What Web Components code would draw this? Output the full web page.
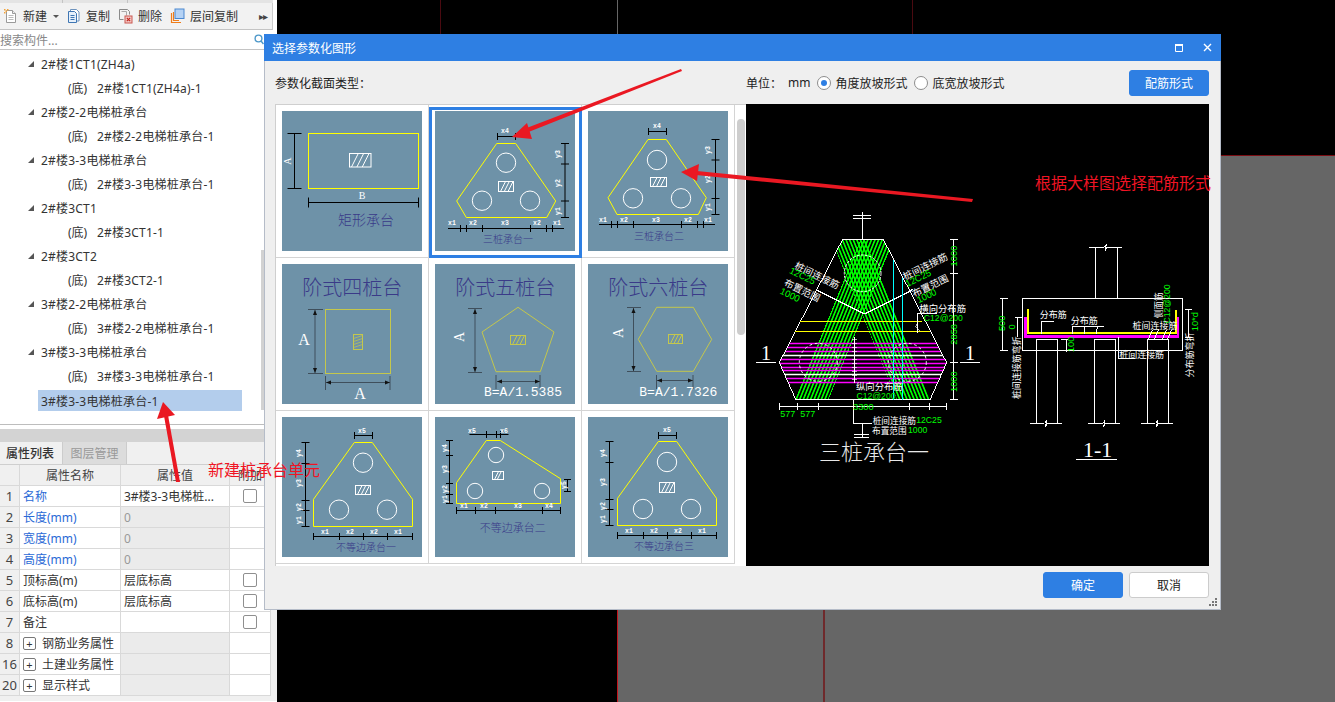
<!DOCTYPE html>
<html lang="zh">
<head>
<meta charset="utf-8">
<title>选择参数化图形</title>
<style>
  html, body { margin: 0; padding: 0; background: #000; }
  body { font: 12px "Noto Sans", "Noto Sans CJK SC", sans-serif; color: #333; overflow: hidden; }
</style>
</head>
<body>
<cad-desk>
  <side-panel></side-panel>
  <param-dialog slot="window"></param-dialog>
  <note-arrows slot="window"></note-arrows>
</cad-desk>

<script>
const UI_FONT = `"Noto Sans", "Noto Sans CJK SC", sans-serif`;
const BLUE = '#2e7fe3';

/* ---------- desk behind the windows ---------- */
class CadDesk extends HTMLElement {
  constructor() {
    super();
    this.attachShadow({ mode: 'open' });
  }
  connectedCallback() {
    this.shadowRoot.innerHTML = `
      <style>
        :host { display: block; position: relative; width: 1335px; height: 702px; background: #000; overflow: hidden; }
        .grey { position: absolute; left: 617px; top: 156px; right: 0; bottom: 0; background: #666; }
        .edge { position: absolute; left: 617px; top: 155px; right: 0; height: 1px; background: #7a0c12; }
        .v { position: absolute; top: 0; bottom: 0; width: 1px; }
        .v1 { left: 440px; height: 156px; bottom: auto; background: #4a0a10; }
        .v2 { left: 617px; background: #c4141c; }
        .v2t { left: 617px; bottom: auto; height: 156px; background: #666; }
        .v3 { left: 912px; height: 156px; bottom: auto; background: #4a0a10; }
        .v4 { left: 823px; top: 156px; width: 2px; background: #6f2a2c; }
        ::slotted(side-panel) { position: relative; }
      </style>
      <div class="grey"></div><div class="edge"></div>
      <div class="v v1"></div><div class="v v2"></div><div class="v v2t"></div><div class="v v3"></div><div class="v v4"></div>
      <slot></slot>
      <slot name="window"></slot>
    `;
  }
}

/* ---------- left side: toolbar, tree, properties ---------- */
const icons = {
  nuevo: `<svg width="15" height="16" viewBox="0 0 15 16"><path d="M3.5 2.5h6l3 3v9h-9z" fill="#fff" stroke="#9a9a9a"/><path d="M9.5 2.5v3h3" fill="#eee" stroke="#9a9a9a"/><path d="M5.5 7.5h5M5.5 9.5h5M5.5 11.5h5" stroke="#bbb"/><path d="M1 1h1.5v1.5H1zM4 1h1.5v1.5H4zM1 4h1.5v1.5H1zM2.5 2.5H4V4H2.5z" fill="#f2a33a"/></svg>`,
  copia: `<svg width="15" height="16" viewBox="0 0 15 16"><path d="M4.5 3V1.5h6l2.5 2.5v9h-2" fill="#fff" stroke="#6e93bd"/><path d="M2.5 3.5h6l2 2v9h-8z" fill="#e6f0fb" stroke="#3f76b3"/><path d="M4.5 7.5h4M4.5 9.5h4M4.5 11.5h4" stroke="#3f76b3"/></svg>`,
  borra: `<svg width="15" height="16" viewBox="0 0 15 16"><path d="M1.5 1.5h8l2 2v3" fill="none" stroke="#8a8a8a"/><path d="M1.5 1.5v10h4" fill="none" stroke="#8a8a8a"/><path d="M3.5 3.5h5v4" fill="none" stroke="#aaa"/><rect x="7" y="8" width="7" height="7" fill="#f5c9c6" stroke="#c9564f"/><path d="M8.8 9.8l3.4 3.4M12.2 9.8l-3.4 3.4" stroke="#c22a22" stroke-width="1.2"/></svg>`,
  capas: `<svg width="15" height="16" viewBox="0 0 15 16"><path d="M1.5 5v9.5H11" fill="none" stroke="#ef7d1a" stroke-width="1.2"/><path d="M3.5 4v8.5H9" fill="none" stroke="#ef7d1a" stroke-width="1.2"/><rect x="5" y="1" width="9" height="9.5" fill="#b5d2f4" stroke="#4a87d0"/></svg>`
};

class ToolBtn extends HTMLElement {
  constructor() {
    super();
    this.attachShadow({ mode: 'open' });
  }
  connectedCallback() {
    this.shadowRoot.innerHTML = `
      <style>
        :host { display: inline-flex; align-items: center; gap: 5px; height: 27px; color: #333; white-space: nowrap; }
        svg { display: block; }
      </style>
      ${icons[this.getAttribute('icon')]}<slot></slot>
    `;
  }
}

const arbol = [
  ['2#楼1CT1(ZH4a)', '2#楼1CT1(ZH4a)-1'],
  ['2#楼2-2电梯桩承台', '2#楼2-2电梯桩承台-1'],
  ['2#楼3-3电梯桩承台', '2#楼3-3电梯桩承台-1'],
  ['2#楼3CT1', '2#楼3CT1-1'],
  ['2#楼3CT2', '2#楼3CT2-1'],
  ['3#楼2-2电梯桩承台', '3#楼2-2电梯桩承台-1'],
  ['3#楼3-3电梯桩承台', '3#楼3-3电梯桩承台-1']
];

class ComponentTree extends HTMLElement {
  constructor() {
    super();
    this.attachShadow({ mode: 'open' });
  }
  connectedCallback() {
    const filas = arbol.map(([padre, hijo]) => `
      <div class="row parent"><i></i><span>${padre}</span></div>
      <div class="row child"><span class="di">(底)</span><span>${hijo}</span></div>
    `).join('');
    this.shadowRoot.innerHTML = `
      <style>
        :host { display: block; position: relative; height: 375px; padding-top: 2px; box-sizing: border-box; background: #fff; border-bottom: 1px solid #bdbdbd; color: #333; letter-spacing: .2px; }
        .row { display: flex; align-items: center; height: 24px; white-space: nowrap; }
        .parent { padding-left: 28px; }
        .parent i { width: 0; height: 0; margin-right: 7px; border-left: 6px solid transparent; border-bottom: 6px solid #555; }
        .child { padding-left: 68px; }
        .di { width: 29px; letter-spacing: 0; }
        .sel { margin-left: 38px; width: 204px; height: 21px; margin-top: 2px; padding-left: 3px; box-sizing: border-box; background: #b3cdec; }
        .bar { position: absolute; left: 261px; top: 200px; width: 3px; height: 160px; background: #d2d2d2; }
      </style>
      ${filas}
      <div class="row sel"><span>3#楼3-3电梯桩承台-1</span></div>
      <div class="bar"></div>
    `;
  }
}

const props = [
  ['1', '名称', '3#楼3-3电梯桩...', 'a', true],
  ['2', '长度(mm)', '0', 'g', false],
  ['3', '宽度(mm)', '0', 'g', false],
  ['4', '高度(mm)', '0', 'g', false],
  ['5', '顶标高(m)', '层底标高', 'n', true],
  ['6', '底标高(m)', '层底标高', 'n', true],
  ['7', '备注', '', 'n', true]
];
const grupos = [['8', '钢筋业务属性'], ['16', '土建业务属性'], ['20', '显示样式']];

class PropTable extends HTMLElement {
  constructor() {
    super();
    this.attachShadow({ mode: 'open' });
  }
  connectedCallback() {
    const filas = props.map(([n, nombre, valor, tipo, check]) => {
      const azul = ['1', '2', '3', '4'].includes(n) ? 'azul' : '';
      return `
        <div class="n">${n}</div>
        <div class="c ${azul}">${nombre}</div>
        <div class="c ${tipo === 'g' ? 'off' : ''}">${valor}</div>
        <div class="c chk">${check ? '<b></b>' : ''}</div>`;
    }).join('');
    const extra = grupos.map(([n, nombre]) => `
        <div class="n">${n}</div>
        <div class="c grp"><u>+</u>${nombre}</div>
        <div class="c off"></div>
        <div class="c"></div>`).join('');
    this.shadowRoot.innerHTML = `
      <style>
        :host { display: block; background: #f0f0f0; height: 272px; }
        .band { height: 13px; background: #d3d3d3; margin-top: 4px; position: relative; }
        .tabs { display: flex; height: 22px; padding-left: 0; }
        .tab { display: flex; align-items: center; justify-content: center; height: 22px; box-sizing: border-box; }
        .t1 { width: 62px; padding-right: 2px; color: #333; font-weight: 500; }
        .t2 { width: 65px; background: #dcdcdc; color: #999; border-left: 1px solid #ccc; border-right: 1px solid #ccc; }
        .grid { display: grid; grid-template-columns: 20px 101px 109px 41px; grid-auto-rows: 21px; width: 271px; border-top: 1px solid #cfcfcf; background: #fff; }
        .h, .n, .c { border-bottom: 1px solid #d9d9d9; border-right: 1px solid #d9d9d9; display: flex; align-items: center; box-sizing: border-box; white-space: nowrap; overflow: hidden; }
        .h { justify-content: center; background: #f0f0f0; color: #444; }
        .n { justify-content: center; background: #f0f0f0; color: #444; font-size: 13px; }
        .c { padding-left: 3px; background: #fff; color: #333; }
        .azul { color: #2b6ad6; }
        .off { background: #ebebeb; color: #999; }
        .chk { justify-content: center; padding: 0; }
        .chk b { width: 12px; height: 12px; border: 1px solid #8f8f8f; border-radius: 2px; background: #fff; }
        .grp { color: #333; }
        u { width: 11px; height: 11px; border: 1px solid #777; border-radius: 2px; margin-right: 6px; text-decoration: none; display: flex; align-items: center; justify-content: center; font-size: 11px; line-height: 1; flex: none; }
      </style>
      <div class="band"></div>
      <div class="tabs"><div class="tab t1">属性列表</div><div class="tab t2">图层管理</div></div>
      <div class="grid">
        <div class="h"></div><div class="h">属性名称</div><div class="h">属性值</div><div class="h">附加</div>
        ${filas}${extra}
      </div>
    `;
  }
}

class SidePanel extends HTMLElement {
  constructor() {
    super();
    this.attachShadow({ mode: 'open' });
  }
  connectedCallback() {
    this.shadowRoot.innerHTML = `
      <style>
        :host { display: block; width: 277px; height: 702px; background: #fff; overflow: hidden; }
        .strip { height: 3px; width: 273px; background: linear-gradient(#c4c4c4, #c4c4c4) 62px 0 / 1px 3px no-repeat, linear-gradient(#c4c4c4, #c4c4c4) 127px 0 / 1px 3px no-repeat, #e4e4e4; }
        .tools { display: flex; align-items: center; height: 27px; width: 273px; box-sizing: border-box; padding-left: 3px; background: #f2f2f2; border-bottom: 1px solid #c4c4c4; border-right: 1px solid #ccc; }
        tool-btn { margin-right: 8px; }
        .caret { width: 0; height: 0; border: 3px solid transparent; border-top: 3px solid #555; margin: 3px 7px 0 -2px; }
        .more { margin-left: auto; margin-right: 5px; color: #444; font-size: 10px; letter-spacing: -1px; }
        .search { display: flex; align-items: center; justify-content: space-between; height: 20px; box-sizing: border-box; color: #888; border-bottom: 1px solid #c4c4c4; padding-right: 13px; }
        .search svg { display: block; }
      </style>
      <div class="strip"></div>
      <div class="tools">
        <tool-btn icon="nuevo">新建</tool-btn><span class="caret"></span>
        <tool-btn icon="copia">复制</tool-btn>
        <tool-btn icon="borra">删除</tool-btn>
        <tool-btn icon="capas">层间复制</tool-btn>
        <span class="more">▸▸</span>
      </div>
      <div class="search"><span>搜索构件...</span>
        <svg width="10" height="11" viewBox="0 0 10 11"><circle cx="4.5" cy="4.5" r="3.4" fill="none" stroke="#4c97c9" stroke-width="1.4"/><path d="M7 7l2.5 3" stroke="#4c97c9" stroke-width="1.5"/></svg>
      </div>
      <component-tree></component-tree>
      <prop-table></prop-table>
    `;
  }
}

/* ---------- thumbnails of the parametric shapes ---------- */
const S = { y: '#ffff00', py: '#c4c74c', k: '#000', w: '#fff', t: '#3a3a88' };
const ln = (a, b, c, d, col = S.k, w = 1) => `<line x1="${a}" y1="${b}" x2="${c}" y2="${d}" stroke="${col}" stroke-width="${w}"/>`;
const poly = (pts, col = S.y, w = 1) => `<polygon points="${pts}" fill="none" stroke="${col}" stroke-width="${w}"/>`;
const circ = (x, y, r = 9.7) => `<circle cx="${x}" cy="${y}" r="${r}" fill="none" stroke="#fff"/>`;
const lab = (x, y, t, rot = 0, size = 6.5, fam = 'Liberation Mono') =>
  `<text x="${x}" y="${y}" fill="#fff" font-size="${size}" font-family="${fam}" font-weight="${fam === 'Liberation Mono' ? 700 : 400}" text-anchor="middle" dominant-baseline="central"${rot ? ` transform="rotate(${rot} ${x} ${y})"` : ''}>${t}</text>`;
const title = (x, y, t, size = 10) =>
  `<text x="${x}" y="${y}" fill="${S.t}" font-size="${size}" font-weight="300" font-family="Noto Sans CJK SC" text-anchor="middle" dominant-baseline="central">${t}</text>`;
const hatch = (x1, y1, x2, y2, col = '#fff') => {
  let out = `<rect x="${x1}" y="${y1}" width="${x2 - x1}" height="${y2 - y1}" fill="none" stroke="${col}"/>`;
  const w = x2 - x1, h = y2 - y1;
  if (h > w) {
    // rectangulo alto: rayas cortas de lado a lado
    for (let y = y1 + 3; y < y2; y += 3) out += ln(x1, y + 1, x2, y - 2, col, .7);
    return out;
  }
  for (let x = x1 + 2; x < x2 - h / 2; x += w / 4) out += ln(x, y2, x + h / 2, y1, col);
  return out;
};
const dimH = (y, xs, a = xs[0], b = xs[xs.length - 1], t = 3.5) =>
  ln(a, y, b, y) + xs.map(x => ln(x, y - t, x, y + t)).join('');
const dimV = (x, ys, t = 3.5) =>
  ln(x, ys[0], x, ys[ys.length - 1]) + ys.map(y => ln(x - t, y, x + t, y)).join('');
const arrowDim = (a, b, c, d) => {
  // linea gris con dos puntas
  const v = a === c;
  const p1 = v ? `${a - 2},${b + 5} ${a + 2},${b + 5} ${a},${b}` : `${a + 5},${b - 2} ${a + 5},${b + 2} ${a},${b}`;
  const p2 = v ? `${c - 2},${d - 5} ${c + 2},${d - 5} ${c},${d}` : `${c - 5},${d - 2} ${c - 5},${d + 2} ${c},${d}`;
  return ln(a, b, c, d, '#3f4f5c') + `<polygon points="${p1}" fill="#111"/><polygon points="${p2}" fill="#111"/>`;
};

const dibujos = {
  rect: () =>
    `<rect x="26.5" y="22.5" width="110" height="55" fill="none" stroke="${S.y}"/>` +
    dimV(12.5, [22.5, 77.5], 7) + dimH(91.5, [26.5, 136.5], 26.5, 136.5, 5) +
    lab(5.5, 50, 'A', -90, 10, 'Liberation Serif') + lab(80, 84, 'B', 0, 10, 'Liberation Serif') +
    hatch(67.5, 42.5, 89, 56) + title(84, 108, '矩形承台', 14),
  tres1: () =>
    poly('61.7,32.5 80.7,32.5 120.7,90 111.7,106.5 31.3,106.5 21.7,90') +
    circ(71, 51.7) + circ(47, 89.7) + circ(95, 89.7) + hatch(63.5, 70.5, 78.5, 80.5) +
    dimH(25.5, [62.5, 80.5]) + lab(70, 20, 'x4') +
    dimV(130, [32.5, 53, 90, 106.5], 4) + lab(123, 43, 'y3', -90) + lab(123, 72, 'y2', -90) + lab(123, 100, 'y1', -90) +
    dimH(117.5, [25.5, 31.5, 47.5, 95.5, 111.5, 117.5], 13, 129) +
    lab(17, 112, 'x1') + lab(38, 112, 'x2') + lab(70, 112, 'x3') + lab(102, 112, 'x2') + lab(122, 112, 'x1') +
    title(73, 127, '三桩承台一'),
  tres2: () =>
    poly('60,28.5 78.3,28.5 118.3,86.7 110.3,103.5 29,103.5 20,86.7') +
    circ(69, 49) + circ(45, 87.3) + circ(93, 87.3) + hatch(62.5, 66.5, 78.5, 75.5) +
    dimH(20.5, [60.5, 78.5]) + lab(69, 15.5, 'x4') +
    dimV(127.5, [28.5, 49, 87.5, 103.5], 4) + lab(120.5, 39, 'y3', -90) + lab(120.5, 68, 'y2', -90) + lab(120.5, 96, 'y1', -90) +
    dimH(113.5, [23.5, 29.5, 45.5, 93.5, 109.5, 115.5], 11, 127) +
    lab(15, 109, 'x1') + lab(36, 109, 'x2') + lab(68, 109, 'x3') + lab(100, 109, 'x2') + lab(120, 109, 'x1') +
    title(71, 124, '三桩承台二'),
  cuatro: () =>
    title(70.3, 22.3, '阶式四桩台', 20) +
    `<rect x="43.5" y="45.5" width="65" height="64" fill="none" stroke="${S.py}"/>` +
    ln(26, 45.5, 41, 45.5, '#3f4f5c') + ln(26, 109.5, 41, 109.5, '#3f4f5c') + arrowDim(33, 46, 33, 109) +
    ln(43.5, 112, 43.5, 126, '#3f4f5c') + ln(108, 112, 108, 126, '#3f4f5c') + arrowDim(44, 118.5, 108, 118.5) +
    lab(22, 75, 'A', 0, 16, 'Liberation Serif') + lab(78, 129, 'A', 0, 16, 'Liberation Serif') +
    hatch(71.5, 70.5, 80.5, 85.5, S.py),
  cinco: () =>
    title(70.3, 22.3, '阶式五桩台', 20) +
    poly('83,43.3 119,68 105.3,107.7 61,107.7 47,68', S.py) +
    ln(33, 44.5, 47, 44.5, '#3f4f5c') + ln(33, 108.5, 47, 108.5, '#3f4f5c') + arrowDim(40, 45, 40, 108) +
    ln(61, 111, 61, 125, '#3f4f5c') + ln(105, 111, 105, 125, '#3f4f5c') + arrowDim(62, 117.5, 105, 117.5) +
    lab(24, 73, 'A', -90, 14, 'Liberation Serif') + hatch(75.5, 71.5, 90.5, 80.5, S.py) +
    `<text x="88" y="128" fill="#fff" font-size="13" font-family="Liberation Mono" text-anchor="middle" dominant-baseline="central">B=A/1.5385</text>`,
  seis: () =>
    title(70.3, 22.3, '阶式六桩台', 20) +
    poly('68.7,43.3 105.3,43.3 123.7,75.3 105.3,107.3 68.7,107.3 50.3,75.3', S.py) +
    ln(39, 43.5, 53, 43.5, '#3f4f5c') + ln(39, 107.5, 53, 107.5, '#3f4f5c') + arrowDim(45.5, 44, 45.5, 107) +
    ln(68.5, 111, 68.5, 125, '#3f4f5c') + ln(105, 111, 105, 125, '#3f4f5c') + arrowDim(69, 116.5, 105, 116.5) +
    lab(30, 69, 'A', -90, 14, 'Liberation Serif') + hatch(80.5, 70.5, 94.5, 79.5, S.py) +
    `<text x="90.3" y="128" fill="#fff" font-size="13" font-family="Liberation Mono" text-anchor="middle" dominant-baseline="central">B=A/1.7326</text>`,
  desig1: () =>
    poly('72.3,25.5 90.3,25.5 130.5,82.3 130.5,109.5 31.5,109.5 31.5,82.3') +
    circ(81, 45.7) + circ(57, 92.7) + circ(105, 92.7) + hatch(73.5, 68.5, 88.5, 77.5) +
    dimH(18.5, [72.5, 90.5]) + lab(80, 14.5, 'x5') +
    dimV(23.5, [25.5, 46.5, 83.5, 93.5, 109.5], 4) + lab(17, 36, 'y4', -90) + lab(17, 66, 'y3', -90) + lab(17, 90, 'y2', -90) + lab(17, 103, 'y1', -90) +
    dimH(119.5, [31.5, 57.5, 81.5, 105.5, 130.5]) + lab(43, 115, 'x1') + lab(68, 115, 'x2') + lab(92, 115, 'x2') + lab(116, 115, 'x1') +
    title(84, 129.5, '不等边承台一'),
  desig2: () =>
    poly('51.3,23.5 65.3,23.5 125.5,61.7 125.5,86.5 21.5,86.5 21.5,65.7') +
    circ(61, 38, 7.7) + circ(40, 74, 7.7) + circ(107, 74, 7.7) + hatch(57.5, 54.5, 68.5, 62.5) +
    dimH(17.5, [51.5, 61.5, 65.5], 34.5, 73.5) + lab(37, 14, 'x5') + lab(69, 14, 'x6') +
    dimV(14.5, [23.5, 38.5, 66.5, 77.5, 86.5], 3.5) + lab(10, 31, 'y4', -90) + lab(10, 52, 'y3', -90) + lab(10, 72, 'y2', -90) + lab(10, 82, 'y1', -90) +
    dimH(93.5, [21.5, 40.5, 60.5, 107.5, 125.5]) + lab(29, 89, 'x1') + lab(49, 89, 'x2') + lab(83, 89, 'x3') + lab(114, 89, 'x4') +
    dimV(132.5, [62.5, 74.5]) + lab(129, 68, 'y5', -90) +
    title(77.7, 110.3, '不等边承台二', 11),
  desig3: () =>
    poly('70.3,24.5 88.7,24.5 128.5,81.3 128.5,108.5 29.5,108.5 29.5,81.3') +
    circ(79, 45) + circ(55, 92) + circ(103, 92) + hatch(71.5, 65.5, 86.5, 75.5) +
    dimH(18.5, [70.5, 88.5]) + lab(79, 13.5, 'x5') +
    dimV(21.5, [24.5, 45.5, 82.5, 92.5, 108.5], 4) + lab(15, 36, 'y4', -90) + lab(15, 65, 'y3', -90) + lab(15, 89, 'y2', -90) + lab(15, 102, 'y1', -90) +
    dimH(118.5, [29.5, 55.5, 79.5, 103.5, 128.5]) + lab(41, 114, 'x1') + lab(66, 114, 'x2') + lab(90, 114, 'x2') + lab(114, 114, 'x1') +
    title(76, 128.5, '不等边承台三')
};

class ShapeThumb extends HTMLElement {
  constructor() {
    super();
    this.attachShadow({ mode: 'open' });
  }
  connectedCallback() {
    this.shadowRoot.innerHTML = `
      <style>
        :host { display: block; position: relative; box-sizing: border-box; padding: 6px; height: 153px; border-right: 1px solid #d4d4d4; border-bottom: 1px solid #d4d4d4; background: #fff; }
        :host([selected])::after { content: ""; position: absolute; left: 0; right: -1px; top: 2px; bottom: -1px; border: 3px solid ${BLUE}; }
        svg { display: block; width: 140px; height: 140px; background: #6e92a8; }
      </style>
      <svg viewBox="0 0 140 140">${dibujos[this.getAttribute('shape')]()}</svg>
    `;
  }
}

/* ---------- big drawing on the right ---------- */
class CadPreview extends HTMLElement {
  constructor() {
    super();
    this.attachShadow({ mode: 'open' });
  }
  connectedCallback() {
    const W = '#fff', G = '#00ff00';
    const l = (a, b, c, d, col = W, w = 3) => `<line x1="${a}" y1="${b}" x2="${c}" y2="${d}" stroke="${col}" stroke-width="${w}"/>`;
    const pl = (pts, col = W, w = 3) => `<polyline points="${pts}" fill="none" stroke="${col}" stroke-width="${w}"/>`;
    const tx = (x, y, t, col = W, size = 30, rot = 0, fam = 'Noto Sans CJK SC', peso = 400) =>
      `<text x="${x}" y="${y}" fill="${col}" font-size="${size}" font-weight="${peso}" font-family="${fam}" text-anchor="middle" dominant-baseline="central"${rot ? ` transform="rotate(${rot} ${x} ${y})"` : ''}>${t}</text>`;
    const num = (x, y, t, rot = 0, size = 28) => tx(x, y, t, G, size, rot, 'Liberation Sans');
    // las lineas rosas van sin crispEdges: con el se perdian casi todas
    const rosas = [430.5, 442.5, 454.5, 466.5, 478.5, 490.5, 502.5, 511.5, 523.5, 535.5, 547.5]
      .map((y, i) => `<line class="suave" x1="60" y1="${y}" x2="620" y2="${y}" stroke="${i === 3 || i === 8 ? W : '#ff00ff'}" stroke-width="5"/>`).join('');
    const grapas = [];
    for (let y = 418; y < 548; y += 12) grapas.push(l(306, y, 322, y, W, 2));
    const rupt = (x1, x2, y) => l(x1, y, (x1 + x2) / 2 - 4, y) + pl(`${(x1 + x2) / 2 - 4},${y} ${(x1 + x2) / 2 + 3},${y - 9} ${(x1 + x2) / 2 - 1},${y + 10} ${(x1 + x2) / 2 + 5},${y}`) + l((x1 + x2) / 2 + 5, y, x2, y);

    this.shadowRoot.innerHTML = `
      <style>
        :host { display: block; width: 463px; height: 462px; background: #000; overflow: hidden; }
        svg { display: block; }
        line:not(.suave), polyline, polygon { shape-rendering: crispEdges; }
      </style>
      <svg width="463" height="462" viewBox="746 104 463 462">
        <defs>
          <pattern id="rayaA" patternUnits="userSpaceOnUse" width="10" height="10" patternTransform="rotate(22)">
            <rect width="5" height="10" fill="#00ff00"/>
          </pattern>
          <pattern id="rayaB" patternUnits="userSpaceOnUse" width="10" height="10" patternTransform="rotate(-22)">
            <rect width="5" height="10" fill="#00ff00"/>
          </pattern>
          <clipPath id="hex"><polygon points="278,118 400,118 590,488 540,600 138,600 88,488"/></clipPath>
        </defs>

        <g transform="translate(750 200) scale(.3333)">
          <g clip-path="url(#hex)">
            <polygon points="332,118 432,118 235,600 135,600" fill="url(#rayaA)"/>
            <polygon points="244,118 344,118 541,600 441,600" fill="url(#rayaB)"/>
            ${rosas}
          </g>
          <polygon points="278,118 400,118 590,488 540,600 138,600 88,488" fill="none" stroke="${W}" stroke-width="3"/>
          <circle cx="338" cy="220" r="55" fill="none" stroke="${W}" stroke-width="3" stroke-dasharray="8 4"/>
          <circle cx="205" cy="487" r="57" fill="none" stroke="${W}" stroke-width="3" stroke-dasharray="8 8"/>
          <circle cx="472" cy="487" r="57" fill="none" stroke="${W}" stroke-width="3" stroke-dasharray="8 8"/>
          ${pl('200,270 345,342 490,268', W, 4)}
          ${l(150, 364, 515, 364, '#ffff00', 3)}${l(135, 394, 540, 394, '#ffff00', 3)}
          ${l(431, 180, 431, 600, '#00ffff', 3)}${l(458, 235, 458, 600, '#00ffff', 3)}
          ${l(338, 35, 338, 118)}${l(310, 48, 364, 48)}${l(310, 55, 364, 55)}
          ${l(314, 410, 314, 548)}${grapas.join('')}
          ${pl('503,400 503,340 560,340')}${pl('505,365 497,380 510,392', W, 2)}
          ${l(612, 118, 612, 600)}${[118, 222, 488, 600].map(y => l(600, y, 625, y)).join('')}
          ${l(88, 620, 590, 620)}${[88, 142, 205, 480, 538, 590].map(x => l(x, 608, x, 630)).join('')}
          ${pl('312,600 312,672 365,672')}
          ${l(338, 672, 338, 715)}${l(312, 703, 356, 703)}${l(312, 713, 356, 713)}
          ${l(18, 488, 78, 488)}${l(630, 488, 690, 488)}
          ${tx(48, 460, '1', W, 60, 0, 'Liberation Serif')}${tx(660, 460, '1', W, 60, 0, 'Liberation Serif')}
          ${tx(202, 225, '桩间连接筋', W, 29, 26)}${num(157, 228, '12C25', 26)}
          ${tx(157, 270, '布置范围', W, 29, 26)}${num(120, 285, '1000', 26)}
          ${tx(525, 198, '桩间连接筋', W, 29, -26)}${num(505, 235, '12C25', -26)}
          ${tx(540, 256, '布置范围', W, 29, -26)}${num(530, 288, '1000', -26)}
          ${tx(578, 323, '横向分布筋', W, 28)}${num(580, 354, 'C12@200', 0, 26)}
          ${num(612, 168, '1000', -90)}${num(612, 403, '2858', -90)}${num(612, 545, '1000', -90)}
          ${tx(340, 620, '3300', G, 28, 0, 'Liberation Sans')}${num(143, 642, '577&#160;&#160;577', 0, 27)}
          ${tx(388, 558, '纵向分布筋', W, 28)}${num(378, 588, 'C12@200', 0, 26)}
          ${tx(433, 660, '桩间连接筋', W, 26)}${num(537, 661, '12C25', 0, 26)}
          ${tx(418, 690, '布置范围', W, 26)}${num(503, 691, '1000', 0, 26)}
          ${tx(372, 750, '三桩承台一', '#e8e8e8', 66, 0, 'Noto Sans CJK SC', 300)}
        </g>

        <g transform="translate(985 230) scale(.3333)">
          ${l(112, 205, 593, 205)}${l(112, 361, 593, 361)}${l(112, 205, 112, 361)}${l(593, 205, 593, 361)}
          ${l(331, 52, 331, 205)}${l(397, 52, 397, 205)}${rupt(312, 410, 52)}
          ${[[154, 217], [328, 392], [487, 550]].map(([a, b]) => l(a, 328, a, 580) + l(b, 328, b, 580) + l(a, 328, b, 328) + rupt(a - 19, b + 13, 580)).join('')}
          ${pl('122,262 122,320 579,320 579,262', '#ff00ff', 7)}
          ${pl('129,238 129,310 573,310 573,240', '#ffff00', 6)}
          ${pl('169,312 169,274 206,274')}${pl('262,312 262,290 358,290')}${l(300, 290, 298, 312)}${l(337, 290, 334, 312)}
          ${[494, 512, 536, 552].map(x => l(x + 8, 300, x - 4, 328)).join('')}
          ${pl('400,320 400,385 450,385')}
          ${l(52, 205, 52, 362)}${l(45, 205, 68, 205)}${l(45, 362, 68, 362)}
          ${l(97, 262, 97, 322)}${l(90, 262, 112, 262)}
          ${l(244, 328, 244, 365)}${l(228, 328, 250, 328)}
          ${l(610, 240, 610, 322)}${l(600, 240, 622, 240)}${l(600, 322, 622, 322)}
          ${num(52, 280, '500', -90)}${num(82, 291, '0', -90)}${num(258, 343, '100', -90)}${num(630, 275, '10*d', -90)}${num(546, 222, 'C12@200', -90, 26)}
          ${tx(518, 226, '侧面筋', W, 26, -90)}
          ${tx(205, 255, '分布筋', W, 27)}${tx(298, 273, '分布筋', W, 27)}
          ${tx(510, 288, '桩间连接筋', W, 27)}${tx(470, 375, '桩间连接筋', W, 27)}
          ${tx(95, 413, '桩间连接筋弯折', W, 27, -90)}${tx(615, 375, '分布筋弯折', W, 27, -90)}
          ${tx(338, 660, '1-1', W, 66, 0, 'Liberation Serif')}${l(273, 688, 395, 688, W, 4)}
        </g>
      </svg>
    `;
  }
}

/* ---------- dialog ---------- */
class UiButton extends HTMLElement {
  constructor() {
    super();
    this.attachShadow({ mode: 'open' });
  }
  connectedCallback() {
    this.shadowRoot.innerHTML = `
      <style>
        :host { display: inline-flex; align-items: center; justify-content: center; width: 80px; height: 26px; box-sizing: border-box; border-radius: 3px; background: #fff; border: 1px solid #ccc; color: #222; }
        :host([primary]) { background: ${BLUE}; border-color: ${BLUE}; color: #fff; }
      </style>
      <slot></slot>
    `;
  }
}

class UiRadio extends HTMLElement {
  constructor() {
    super();
    this.attachShadow({ mode: 'open' });
  }
  connectedCallback() {
    this.shadowRoot.innerHTML = `
      <style>
        :host { display: inline-flex; align-items: center; gap: 4px; color: #222; white-space: nowrap; }
        i { display: flex; align-items: center; justify-content: center; width: 14px; height: 14px; box-sizing: border-box; border: 1px solid #8d8d8d; border-radius: 50%; background: #fff; }
        :host([checked]) i::after { content: ""; width: 6px; height: 6px; border-radius: 50%; background: ${BLUE}; }
      </style>
      <i></i><slot></slot>
    `;
  }
}

class ParamDialog extends HTMLElement {
  constructor() {
    super();
    this.attachShadow({ mode: 'open' });
  }
  connectedCallback() {
    const formas = ['rect', 'tres1', 'tres2', 'cuatro', 'cinco', 'seis', 'desig1', 'desig2', 'desig3'];
    const celdas = formas.map(f => `<shape-thumb shape="${f}"${f === 'tres1' ? ' selected' : ''}></shape-thumb>`).join('');
    this.shadowRoot.innerHTML = `
      <style>
        :host { position: absolute; left: 264px; top: 34px; width: 957px; height: 576px; display: flex; flex-direction: column; box-sizing: border-box; background: #efefef; border-right: 1px solid #b5bcc8; border-bottom: 1px solid #b5bcc8; border-left: 1px solid #b5bcc8; color: #222; }
        .title { display: flex; align-items: center; height: 27px; flex: none; margin: 0 -1px; padding: 0 9px 0 8px; background: ${BLUE}; color: #fff; }
        .title span { flex: 1; }
        .title svg { display: block; margin-left: 20px; }
        .bar { display: grid; grid-template-columns: 471px auto 1fr auto; align-items: center; height: 43px; flex: none; padding: 0 11px 0 10px; }
        .unit { display: flex; align-items: center; }
        .unit .mm { margin: 0 7px 0 6px; }
        ui-radio { margin-right: 7px; }
        .main { display: flex; height: 462px; flex: none; padding: 0 11px 0 10px; }
        .list { position: relative; width: 471px; height: 462px; box-sizing: border-box; overflow: hidden; background: #fff; border-top: 1px solid #cfcfcf; border-left: 1px solid #cfcfcf; }
        .cells { display: grid; grid-template-columns: repeat(3, 153px); }
        .scroll { position: absolute; right: 1px; top: 14px; width: 8px; height: 216px; border-radius: 4px; background: #cdcdcd; }
        .foot { display: flex; justify-content: flex-end; gap: 6px; padding: 6px 11px 0 0; }
        .grip { position: absolute; right: 2px; bottom: 2px; }
      </style>
      <div class="title"><span>选择参数化图形</span>
        <svg width="8" height="8" viewBox="0 0 8 8"><path d="M.5 1.5h7v6h-7z" fill="none" stroke="#fff"/><path d="M0 1h8" stroke="#fff" stroke-width="2"/></svg>
        <svg width="9" height="9" viewBox="0 0 9 9"><path d="M1 1l7 7M8 1L1 8" stroke="#fff" stroke-width="1.4"/></svg>
      </div>
      <div class="bar">
        <div>参数化截面类型：</div>
        <div class="unit"><span>单位：</span><span class="mm">mm</span>
          <ui-radio checked>角度放坡形式</ui-radio><ui-radio>底宽放坡形式</ui-radio></div>
        <div></div>
        <ui-button primary>配筋形式</ui-button>
      </div>
      <div class="main">
        <div class="list"><div class="cells">${celdas}</div><div class="scroll"></div></div>
        <cad-preview></cad-preview>
      </div>
      <div class="foot"><ui-button primary>确定</ui-button><ui-button>取消</ui-button></div>
      <svg class="grip" width="9" height="9" viewBox="0 0 9 9" fill="#777"><path d="M6 0h2v2H6zM3 3h2v2H3zM6 3h2v2H6zM0 6h2v2H0zM3 6h2v2H3zM6 6h2v2H6z"/></svg>
    `;
  }
}

/* ---------- red marks drawn over the screenshot ---------- */
class NoteArrows extends HTMLElement {
  constructor() {
    super();
    this.attachShadow({ mode: 'open' });
  }
  connectedCallback() {
    const rojo = '#ea1822';
    this.shadowRoot.innerHTML = `
      <style>
        :host { position: absolute; inset: 0; pointer-events: none; }
        svg { position: absolute; inset: 0; }
        .nota { position: absolute; color: #f01424; font-size: 16px; line-height: 20px; white-space: nowrap; font-family: ${UI_FONT}; }
        .n1 { left: 208px; top: 460px; }
        .n2 { left: 1035px; top: 173px; }
      </style>
      <svg width="1335" height="702" viewBox="0 0 1335 702">
        <g fill="${rojo}">
          <polygon points="681,69 682,71 526,133 524,129"/>
          <polygon points="512,137 527,123 532,139"/>
          <polygon points="973,199 972,202 696,175 697,171"/>
          <polygon points="681,172 699,164 697,181"/>
          <polygon points="176,482 180,482 168,415 164,416"/>
          <polygon points="163,402 157,419 175,415"/>
        </g>
      </svg>
      <div class="nota n1">新建桩承台单元</div>
      <div class="nota n2">根据大样图选择配筋形式</div>
    `;
  }
}

customElements.define('cad-desk', CadDesk);
customElements.define('tool-btn', ToolBtn);
customElements.define('component-tree', ComponentTree);
customElements.define('prop-table', PropTable);
customElements.define('side-panel', SidePanel);
customElements.define('shape-thumb', ShapeThumb);
customElements.define('cad-preview', CadPreview);
customElements.define('ui-button', UiButton);
customElements.define('ui-radio', UiRadio);
customElements.define('param-dialog', ParamDialog);
customElements.define('note-arrows', NoteArrows);
</script>
</body>
</html>
